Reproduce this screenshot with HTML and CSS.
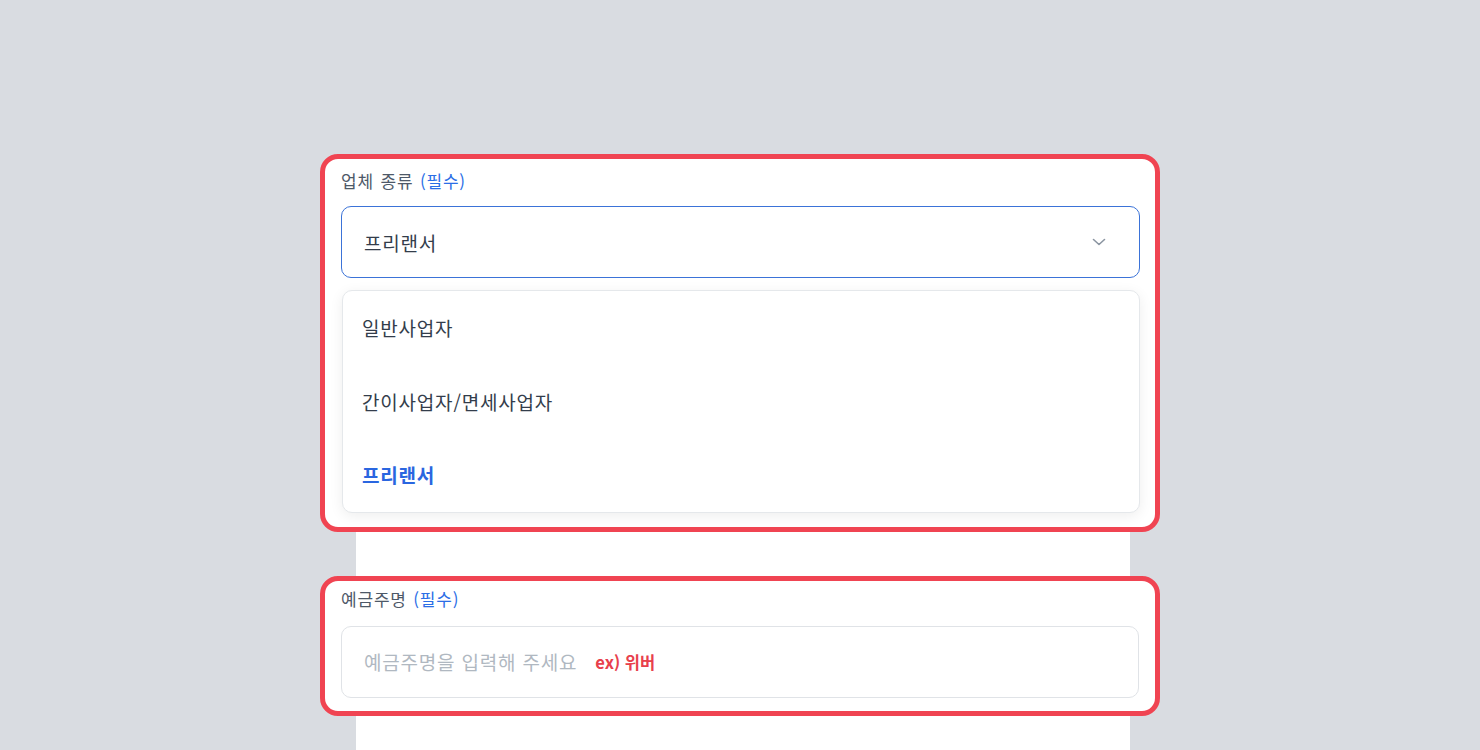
FILE: index.html
```html
<!DOCTYPE html>
<html lang="ko">
<head>
<meta charset="utf-8">
<title>업체 정보</title>
<link rel="stylesheet" href="styles.css">
</head>
<body>
<main class="panel">
  <section class="frame frame-type">
    <div class="label">업체 종류 <span class="req">(필수)</span></div>
    <div class="select">
      <span class="select-value">프리랜서</span>
      <svg class="chevron" width="14" height="8" viewBox="0 0 14 8" aria-hidden="true">
        <polyline points="1.5,1.5 7,6.5 12.5,1.5" fill="none" stroke="#8b95a1" stroke-width="1.6" stroke-linecap="round" stroke-linejoin="round"/>
      </svg>
    </div>
    <ul class="options">
      <li class="option">일반사업자</li>
      <li class="option">간이사업자/면세사업자</li>
      <li class="option selected">프리랜서</li>
    </ul>
  </section>

  <section class="frame frame-name">
    <div class="label">예금주명 <span class="req">(필수)</span></div>
    <div class="input">
      <span class="placeholder">예금주명을 입력해 주세요</span>
      <span class="example">ex) 위버</span>
    </div>
  </section>
</main>
</body>
</html>
```

FILE: styles.css
```css
html, body {
  margin: 0;
  padding: 0;
}
body {
  background: #d9dce1;
  font-family: "Noto Sans CJK KR", "Noto Sans", sans-serif;
  height: 750px;
  overflow: hidden;
}
.panel {
  width: 774px;
  margin: 154px 0 0 356px;
  background: #ffffff;
  min-height: 620px;
  display: flex;
  flex-direction: column;
}
.frame {
  margin-left: -36px;
  margin-right: -30px;
  border: 5px solid #f04452;
  border-radius: 18px;
  background: #ffffff;
  display: flex;
  flex-direction: column;
}
.frame-type {
  padding: 10px 15px 14px 16px;
}
.frame-name {
  margin-top: 44px;
  padding: 6px 15px 13px 16px;
}
.label {
  font-size: 17px;
  line-height: 24px;
  color: #4e5968;
  letter-spacing: 0.8px;
  word-spacing: 1px;
}
.req {
  color: #2b6ee6;
}
.frame-type .label {
  margin-bottom: 13px;
}
.frame-name .label {
  margin-bottom: 15px;
}
.select {
  height: 72px;
  box-sizing: border-box;
  border: 1.5px solid #3b73d8;
  border-radius: 10px;
  display: flex;
  align-items: center;
  justify-content: space-between;
  padding: 0 33px 0 22px;
}
.select-value {
  font-size: 19px;
  letter-spacing: 0.8px;
  color: #333d4b;
}
.chevron {
  display: block;
}
.options {
  list-style: none;
  margin: 12px 0 0 1px;
  padding: 0;
  border: 1px solid #e5e8eb;
  border-radius: 10px;
  background: #ffffff;
  box-shadow: 0 3px 14px rgba(0, 0, 0, 0.07);
}
.option {
  height: 73.5px;
  display: flex;
  align-items: center;
  padding-left: 19px;
  font-size: 19px;
  letter-spacing: 0.8px;
  color: #333d4b;
}
.option.selected {
  color: #2a66e0;
  font-weight: 700;
}
.input {
  height: 72px;
  box-sizing: border-box;
  border: 1px solid #e0e3e7;
  border-radius: 10px;
  display: flex;
  align-items: center;
  padding: 0 22px;
  margin-right: 1px;
}
.placeholder {
  font-size: 19px;
  letter-spacing: 0.8px;
  color: #b0b8c1;
}
.example {
  margin-left: 18px;
  font-size: 16.5px;
  font-weight: 700;
  color: #e8404c;
}
```
